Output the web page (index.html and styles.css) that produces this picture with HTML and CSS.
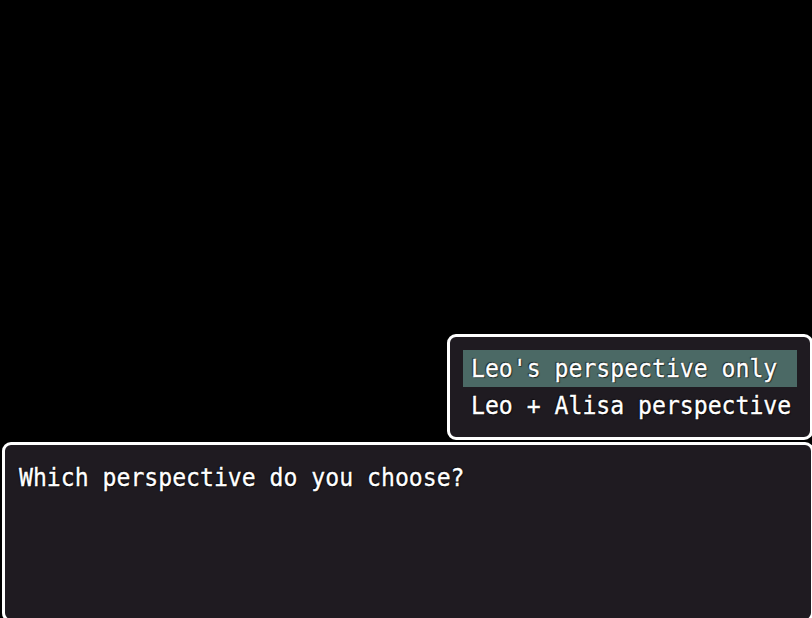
FILE: index.html
```html
<!DOCTYPE html>
<html>
<head>
<meta charset="utf-8">
<link rel="stylesheet" href="styles.css">
</head>
<body>
<div class="stage">
  <div class="window choices">
    <div class="choice selected"><span class="txt">Leo's perspective only</span></div>
    <div class="choice"><span class="txt">Leo + Alisa perspective</span></div>
  </div>
  <div class="window message">
    <div class="line"><span class="txt">Which perspective do you choose?</span></div>
  </div>
</div>
</body>
</html>
```

FILE: styles.css
```css
html, body {
  margin: 0;
  padding: 0;
  background: #000;
  width: 812px;
  height: 618px;
  overflow: hidden;
}
.stage {
  display: flex;
  flex-direction: column;
  padding-top: 334px;
  gap: 2px;
  font-family: "DejaVu Sans Mono", monospace;
  font-size: 25px;
  color: #fff;
}
.window {
  box-sizing: border-box;
  background: #1f1b21;
  border: 3px solid #fff;
  border-radius: 9px;
}
.choices {
  margin-left: 447px;
  width: 366px;
  height: 106px;
  padding: 13px 0 0 13px;
}
.choice {
  box-sizing: border-box;
  width: 334px;
  height: 37px;
  line-height: 38px;
  padding-left: 8px;
  white-space: pre;
}
.choice.selected {
  background: #4b6965;
}
.txt {
  display: inline-block;
  transform: scaleX(0.925);
  transform-origin: left center;
  text-shadow: 0 0 1px #000, 1px 1px 1px rgba(0,0,0,0.6), -1px -1px 1px rgba(0,0,0,0.6);
  -webkit-text-stroke: 0.35px #fff;
}
.message {
  margin-left: 2px;
  width: 812px;
  height: 180px;
  padding: 14px 0 0 14px;
}
.line {
  height: 37px;
  line-height: 38px;
  white-space: pre;
}
```
